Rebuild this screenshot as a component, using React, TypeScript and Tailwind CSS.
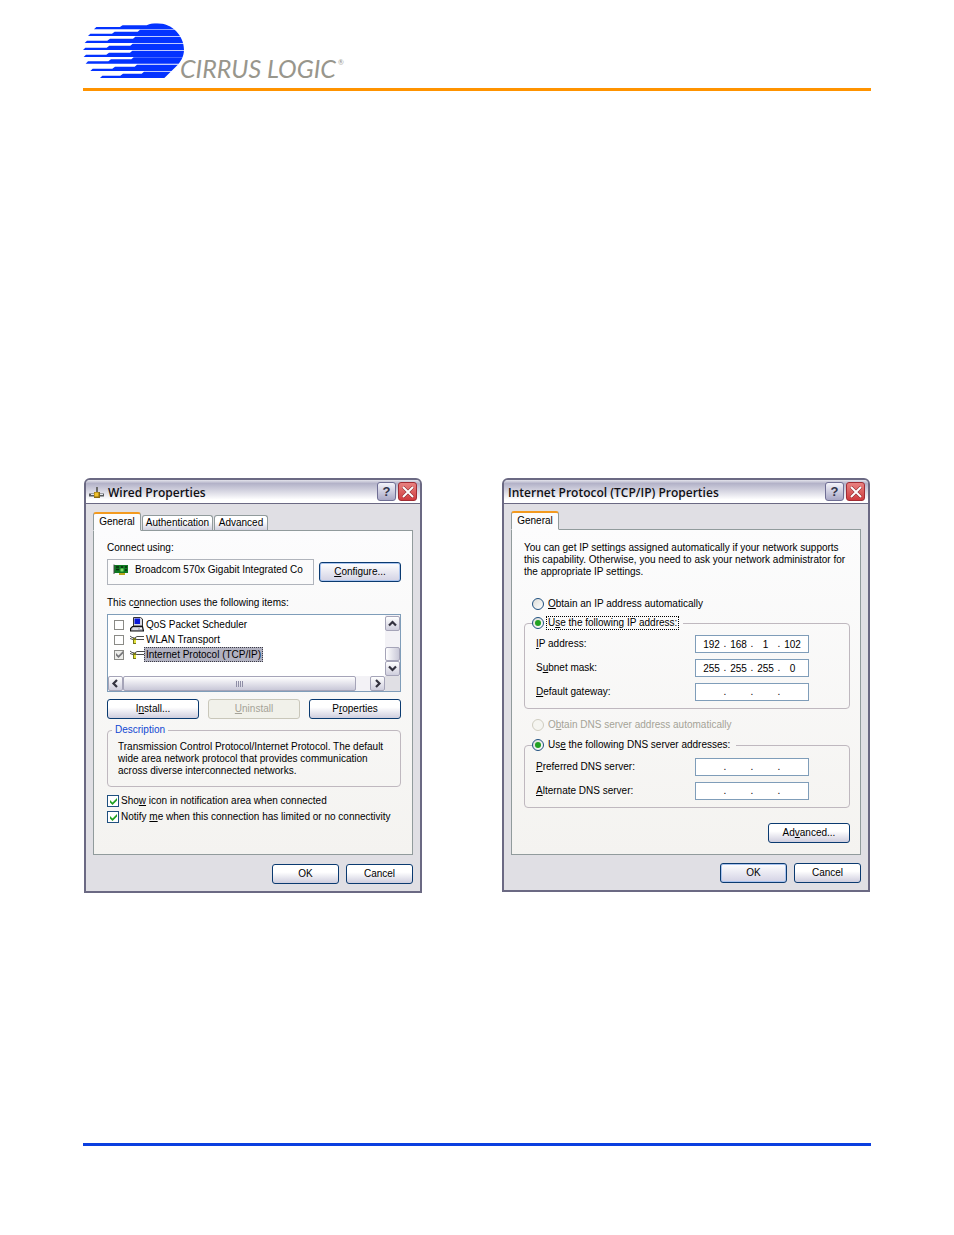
import React, { useState } from "react";

interface DialogProps {
  title: string;
  icon?: React.ReactNode;
  children: React.ReactNode;
}

interface XpButtonProps {
  children: React.ReactNode;
  className?: string;
  disabled?: boolean;
  focused?: boolean;
}

interface AddressRowProps {
  label: React.ReactNode;
  name: string;
  parts: string[];
}

// one entry per stripe: bottom edge, start of the thin, middle and full part
const stripes = [
  { y: 42, thin: 57, mid: 137, full: 215 },
  { y: 62, thin: 39, mid: 113, full: 191 },
  { y: 83, thin: 29, mid: 99, full: 177 },
  { y: 104, thin: 24, mid: 97, full: 169 },
  { y: 125, thin: 26, mid: 96, full: 168 },
  { y: 145, thin: 32, mid: 102, full: 172 },
  { y: 167, thin: 46, mid: 114, full: 182 },
  { y: 188, thin: 75, mid: 138, full: 203 },
];

const CirrusMark = () => (
  <svg className="h-[55px] w-[102px]" viewBox="24 23 306 165" aria-hidden="true">
    <defs>
      <clipPath id="cloud">
        <path d="M20 30 H215 C225 25 236 24 247 24 C292 24 327 62 327 103 C327 124 316 142 301 156 L267 189 H20 Z" />
      </clipPath>
    </defs>
    <g clipPath="url(#cloud)">
      {stripes.map((s) => (
        <path
          key={s.y}
          d={`M${s.thin + 7} ${s.y - 7} H${s.mid - 2} L${s.mid + 6} ${s.y - 13} H${s.full - 3} L${s.full + 4} ${s.y - 19} H330 V${s.y} H${s.thin} Z`}
          fill="#0433ff"
        />
      ))}
    </g>
  </svg>
);

const Check = ({ color }: { color: string }) => (
  <svg className="pointer-events-none size-[7px] [grid-area:1/1]" viewBox="0 0 7 7" aria-hidden="true">
    <path d="M0 2 L2.5 4.5 L7 0 V2.6 L2.5 7 L0 4.6 Z" fill={color} />
  </svg>
);

const ConnectionIcon = () => (
  <svg className="h-4 w-4" viewBox="0 0 16 16" aria-hidden="true">
    <path d="M8 3 V8" stroke="#6a6a6a" strokeWidth="2" />
    <path d="M0 11 H6 M10 11 H15" stroke="#55585c" strokeWidth="3" />
    <path d="M2 10.500 H6 M10 10.500 H14" stroke="#e4e6ea" strokeWidth="1" />
    <rect x="5" y="8" width="6" height="6" fill="#8a6a10" />
    <rect x="5.500" y="8.500" width="4" height="4" fill="#f2c22c" />
  </svg>
);

const CardIcon = () => (
  <svg className="h-3 w-4" viewBox="0 0 16 12" aria-hidden="true">
    <rect x="1" y="1" width="14" height="8" fill="#0f7a22" />
    <path d="M1 .5 V10" stroke="#4b4b4b" strokeWidth="1" />
    <path d="M3 3 H6 M3 5.500 H6 M8 3 H10 M12 3 H14 M12 6 H14" stroke="#0a2a0c" strokeWidth="1.500" />
    <rect x="7.500" y="4.500" width="3" height="3" fill="#7ee06a" />
    <path d="M6 10 H12" stroke="#b9a61b" strokeWidth="2" />
  </svg>
);

const ComputerIcon = () => (
  <svg className="h-[15px] w-[14px]" viewBox="0 0 14 15" aria-hidden="true">
    <path d="M3.500 .5 H10.500 L12.500 2 V9 H3.500 Z" fill="#d9d9e2" stroke="#333" strokeWidth="1" />
    <rect x="4.500" y="1.500" width="5.500" height="5.500" fill="#0a18d8" />
    <path d="M2.500 9.500 H12.500 L13.500 14 H.5 V11.500 Z" fill="#b9b9c6" stroke="#111" strokeWidth="1.200" />
    <path d="M2.500 12 H8 M10 11.500 H12" stroke="#fff" strokeWidth="1" />
  </svg>
);

const ProtocolIcon = () => (
  <svg className="h-[10px] w-[14px]" viewBox="0 0 14 10" aria-hidden="true">
    <path d="M0 1 L2 2.500 L4.500 3 L7 1.500 H14 M7 4.500 H14 M0 3.500 L3 4.500 M5 4 L7 4.500" stroke="#4a4a4a" strokeWidth="1" fill="none" />
    <rect x="3" y="3" width="3" height="6" fill="#77781c" />
    <rect x="4" y="5" width="2" height="3" fill="#e2e23a" />
  </svg>
);

const Arrow = ({ d }: { d: string }) => (
  <svg className="size-[9px]" viewBox="0 0 9 9" aria-hidden="true">
    <path d={d} fill="none" stroke="#33323f" strokeWidth="2.200" />
  </svg>
);

const XpButton = ({ children, className = "", disabled, focused }: XpButtonProps) => {
  const look = disabled
    ? "border-[#c9c7ba] bg-[#f1f1ea] text-[#a5a397]"
    : focused
      ? "border-[#0a3a70] bg-linear-to-b from-white to-[#d3d2e4] ring-1 ring-inset ring-[#a9c3ee]"
      : "border-[#0a3a70] bg-linear-to-b from-white from-40% to-[#cfcede]";
  return (
    <button type="button" disabled={disabled} className={`flex h-5 items-center justify-center rounded-[3px] border ${look} ${className}`}>
      <span>{children}</span>
    </button>
  );
};

const ScrollButton = ({ d, label }: { d: string; label: string }) => (
  <button
    type="button"
    aria-label={label}
    className="flex size-[15px] shrink-0 items-center justify-center rounded-[2px] border border-[#a5a4b8] bg-linear-to-b from-white to-[#cfcedd]"
  >
    <Arrow d={d} />
  </button>
);

const Dialog = ({ title, icon, children }: DialogProps) => (
  <section className="rounded-t-md border-2 border-[#6b6983] bg-[#e0dfe4]">
    <header className="flex h-6 items-center gap-0.5 rounded-t-sm border-b border-[#6b6983] bg-linear-to-b from-[#e4e4ec] via-[#b3b2c8] via-15% to-white to-85% px-[3px]">
      {icon}
      <h2 className="flex-1 pt-[3px] pl-px font-['Open_Sans',sans-serif] text-[12px] leading-4 font-semibold text-[#101014]">{title}</h2>
      <button
        type="button"
        aria-label="Help"
        className="flex size-[19px] items-center justify-center rounded-[3px] border border-[#6f6e94] bg-linear-to-b from-[#f4f4fa] to-[#a9a8c6] text-[13px] font-bold text-[#33334a]"
      >
        ?
      </button>
      <button
        type="button"
        aria-label="Close"
        className="flex size-[19px] items-center justify-center rounded-[3px] border border-[#a02c34] bg-linear-to-b from-[#e88080] to-[#cf3a3e]"
      >
        <svg className="size-3" viewBox="0 0 12 12" aria-hidden="true">
          <path d="M1 1 L11 11 M11 1 L1 11" stroke="#7c2026" strokeWidth="3" />
          <path d="M1 1 L11 11 M11 1 L1 11" stroke="#fff" strokeWidth="2" />
        </svg>
      </button>
    </header>
    {children}
  </section>
);

const ActiveTab = () => (
  <button
    type="button"
    role="tab"
    aria-selected="true"
    className="relative -mb-px h-[19px] w-12 rounded-t-[3px] border border-t-2 border-[#919b9c] border-t-[#f39a1f] border-b-[#fcfcfd] bg-[#fcfcfd]"
  >
    General
  </button>
);

const Tab = ({ children, className }: { children: React.ReactNode; className: string }) => (
  <button
    type="button"
    role="tab"
    aria-selected="false"
    className={`h-[15px] rounded-t-[3px] border border-b-0 border-[#919b9c] bg-linear-to-b from-white from-40% to-[#d2d1e0] ${className}`}
  >
    {children}
  </button>
);

const CheckLine = ({ children }: { children: React.ReactNode }) => {
  const [checked, setChecked] = useState(true);
  return (
    <label className="flex h-3 items-center gap-[2px]">
      <span className="grid place-items-center">
        <input
          type="checkbox"
          checked={checked}
          onChange={(e) => setChecked(e.target.checked)}
          className="size-3 appearance-none border border-[#1f5080] bg-white [grid-area:1/1]"
        />
        {checked && <Check color="#21a121" />}
      </span>
      <span>{children}</span>
    </label>
  );
};

const RadioLine = ({ name, children, checked, disabled, focused }: {
  name: string;
  children: React.ReactNode;
  checked?: boolean;
  disabled?: boolean;
  focused?: boolean;
}) => (
  <label className={`flex items-center gap-0.5 ${disabled ? "text-[#a5a397]" : ""}`}>
    <span className="grid place-items-center">
      <input
        type="radio"
        name={name}
        defaultChecked={checked}
        disabled={disabled}
        className={`peer size-3 appearance-none rounded-full border [grid-area:1/1] ${disabled ? "border-[#cfcdc0] bg-[#f5f5f1]" : "border-[#1f5080] bg-linear-to-br from-[#dcdcd7] to-white"}`}
      />
      <span className="pointer-events-none hidden size-[6px] rounded-full bg-[#21a121] [grid-area:1/1] peer-checked:block" />
    </span>
    <span className={`border px-px leading-3 ${focused ? "border-dotted border-black" : "border-transparent"}`}>{children}</span>
  </label>
);

const ListRow = ({ name, icon, checked, selected }: {
  name: string;
  icon: React.ReactNode;
  checked?: boolean;
  selected?: boolean;
}) => (
  <label className="flex h-[15px] items-center gap-[6px] pl-[6px]">
    <span className="grid place-items-center">
      <input
        type="checkbox"
        defaultChecked={checked}
        className={`size-[10px] appearance-none border border-[#8a8a86] [grid-area:1/1] ${checked ? "bg-[#ededea]" : "bg-white"}`}
      />
      {checked && <Check color="#77777a" />}
    </span>
    <span className="flex items-center">
      {icon}
      <span className={`border px-px leading-[13px] ${selected ? "border-dotted border-[#3c3c46] bg-[#b1b1c0]" : "border-transparent"}`}>{name}</span>
    </span>
  </label>
);

const AddressRow = ({ label, name, parts }: AddressRowProps) => (
  <div className="flex items-center justify-between">
    <label htmlFor={`${name}-0`}>{label}</label>
    <div className="flex h-[18px] w-[114px] items-center justify-center border border-[#7f9db9] bg-white">
      {parts.map((part, i) => (
        <React.Fragment key={i}>
          {i > 0 && <span className="w-[3px] text-center">.</span>}
          <input
            id={`${name}-${i}`}
            aria-label={`${name} ${i + 1}`}
            defaultValue={part}
            className="h-4 w-6 bg-transparent text-center outline-none"
          />
        </React.Fragment>
      ))}
    </div>
  </div>
);

const panelClass = "border border-[#919b9c] bg-linear-to-b from-[#fcfcfd] to-[#f4f3f0]";

const WiredProperties = () => (
  <Dialog title="Wired Properties" icon={<ConnectionIcon />}>
    <div className="px-[7px] pt-2 pb-[7px]">
      <div role="tablist" className="flex items-end gap-px">
        <ActiveTab />
        <Tab className="w-[71px]">Authentication</Tab>
        <Tab className="w-[54px]">Advanced</Tab>
      </div>
      <div className={`${panelClass} pt-[11px] pr-[11px] pb-[31px] pl-[13px]`}>
        <p>Connect using:</p>
        <div className="mt-[5px] flex items-center gap-[5px]">
          <div className="flex h-[26px] flex-1 items-center gap-[6px] border border-[#b0b4bc] pb-1 pl-[5px]">
            <CardIcon />
            <span>Broadcom 570x Gigabit Integrated Co</span>
          </div>
          <XpButton focused className="w-[82px]"><u>C</u>onfigure...</XpButton>
        </div>
        <p className="mt-3">This c<u>o</u>nnection uses the following items:</p>
        <div className="mt-[5px] flex h-[78px] flex-col border border-[#7f9db9] bg-white">
          <div className="flex flex-1">
            <div className="flex-1 pt-0.5">
              <ListRow name="QoS Packet Scheduler" icon={<ComputerIcon />} />
              <ListRow name="WLAN Transport" icon={<ProtocolIcon />} />
              <ListRow name="Internet Protocol (TCP/IP)" icon={<ProtocolIcon />} checked selected />
            </div>
            <div className="flex flex-col bg-[#f3f2f6] pt-px">
              <ScrollButton label="Scroll up" d="M1 6.500 L4.500 3 L8 6.500" />
              <div className="flex-1" />
              <div className="h-[14px] w-[15px] rounded-[2px] border border-[#a5a4b8] bg-linear-to-r from-white to-[#c9c8d8]" />
              <ScrollButton label="Scroll down" d="M1 2.500 L4.500 6 L8 2.500" />
            </div>
          </div>
          <div className="flex bg-[#e0dfe4] pr-[15px]">
            <div className="flex flex-1 bg-[#f3f2f6]">
              <ScrollButton label="Scroll left" d="M6 1 L2.500 4.500 L6 8" />
              <div className="mr-3.5 flex flex-1 items-center justify-center gap-px rounded-[2px] border border-[#a5a4b8] bg-linear-to-b from-white to-[#c9c8d8]">
                {[0, 1, 2, 3].map((n) => (
                  <span key={n} className="h-[6px] w-px bg-[#8f8ea6]" />
                ))}
              </div>
              <ScrollButton label="Scroll right" d="M3 1 L6.500 4.500 L3 8" />
            </div>
          </div>
        </div>
        <div className="mt-[7px] grid grid-cols-3 gap-[9px]">
          <XpButton>I<u>n</u>stall...</XpButton>
          <XpButton disabled><u>U</u>ninstall</XpButton>
          <XpButton>P<u>r</u>operties</XpButton>
        </div>
        <fieldset className="mt-[5px] rounded-[4px] border border-[#bfb8bf] pt-[5px] pr-1 pb-[9px] pl-[10px]">
          <legend className="-ml-[6px] px-[3px] text-[#1046d2]">Description</legend>
          <p>
            Transmission Control Protocol/Internet Protocol. The default
            <br />
            wide area network protocol that provides communication
            <br />
            across diverse interconnected networks.
          </p>
        </fieldset>
        <div className="mt-2 flex flex-col gap-1">
          <CheckLine>Sho<u>w</u> icon in notification area when connected</CheckLine>
          <CheckLine>Notify <u>m</u>e when this connection has limited or no connectivity</CheckLine>
        </div>
      </div>
      <div className="mt-[9px] flex justify-end gap-[7px]">
        <XpButton className="w-[67px]">OK</XpButton>
        <XpButton className="w-[67px]">Cancel</XpButton>
      </div>
    </div>
  </Dialog>
);

const TcpIpProperties = () => (
  <Dialog title="Internet Protocol (TCP/IP) Properties">
    <div className="px-[7px] pt-[7px] pb-[7px]">
      <div role="tablist" className="flex items-end">
        <ActiveTab />
      </div>
      <div className={`${panelClass} pt-3 pr-[10px] pb-[11px] pl-3`}>
        <p>
          You can get IP settings assigned automatically if your network supports
          <br />
          this capability. Otherwise, you need to ask your network administrator for
          <br />
          the appropriate IP settings.
        </p>
        <div className="mt-[19px] flex pl-2">
          <RadioLine name="ip"><u>O</u>btain an IP address automatically</RadioLine>
        </div>
        <fieldset className="mt-[5px] flex flex-col gap-[6px] rounded-[4px] border border-[#bfb8bf] pt-[5px] pr-10 pb-[7px] pl-[11px]">
          <legend className="-ml-1 pr-1">
            <RadioLine name="ip" checked focused>U<u>s</u>e the following IP address:</RadioLine>
          </legend>
          <AddressRow name="ip-address" label={<><u>I</u>P address:</>} parts={["192", "168", "1", "102"]} />
          <AddressRow name="subnet-mask" label={<>S<u>u</u>bnet mask:</>} parts={["255", "255", "255", "0"]} />
          <AddressRow name="gateway" label={<><u>D</u>efault gateway:</>} parts={["", "", "", ""]} />
        </fieldset>
        <div className="mt-[9px] flex pl-2">
          <RadioLine name="dns" disabled>O<u>b</u>tain DNS server address automatically</RadioLine>
        </div>
        <fieldset className="mt-[6px] flex flex-col gap-[6px] rounded-[4px] border border-[#bfb8bf] pt-[6px] pr-10 pb-[7px] pl-[11px]">
          <legend className="-ml-1 pr-1">
            <RadioLine name="dns" checked>Us<u>e</u> the following DNS server addresses:</RadioLine>
          </legend>
          <AddressRow name="preferred-dns" label={<><u>P</u>referred DNS server:</>} parts={["", "", "", ""]} />
          <AddressRow name="alternate-dns" label={<><u>A</u>lternate DNS server:</>} parts={["", "", "", ""]} />
        </fieldset>
        <div className="mt-[15px] flex justify-end">
          <XpButton className="w-[82px]">Ad<u>v</u>anced...</XpButton>
        </div>
      </div>
      <div className="mt-2 flex justify-end gap-[7px]">
        <XpButton focused className="w-[67px]">OK</XpButton>
        <XpButton className="w-[67px]">Cancel</XpButton>
      </div>
    </div>
  </Dialog>
);

const App = () => {
  return (
    <div className="flex min-h-screen flex-col bg-white px-[83px] pt-[23px] pb-[89px] font-['Liberation_Sans',sans-serif] text-[10px] leading-3 whitespace-nowrap text-black">
      <header className="flex items-end border-b-[3px] border-[#ff9300] pb-[10px]">
        <CirrusMark />
        <span className="-ml-[5px] font-['Lato',sans-serif] text-[25px] leading-5 text-[#98968c] italic">CIRRUS LOGIC</span>
        <span className="pb-2.5 pl-0.5 font-['Lato',sans-serif] text-[7px] leading-3 text-[#98968c]">®</span>
      </header>
      <main className="grid flex-1 grid-cols-[338fr_368fr] items-start gap-20 px-px pt-[387px]">
        <WiredProperties />
        <TcpIpProperties />
      </main>
      <footer className="border-t-[3px] border-[#0b3fe0]" />
    </div>
  );
};

export default App;
